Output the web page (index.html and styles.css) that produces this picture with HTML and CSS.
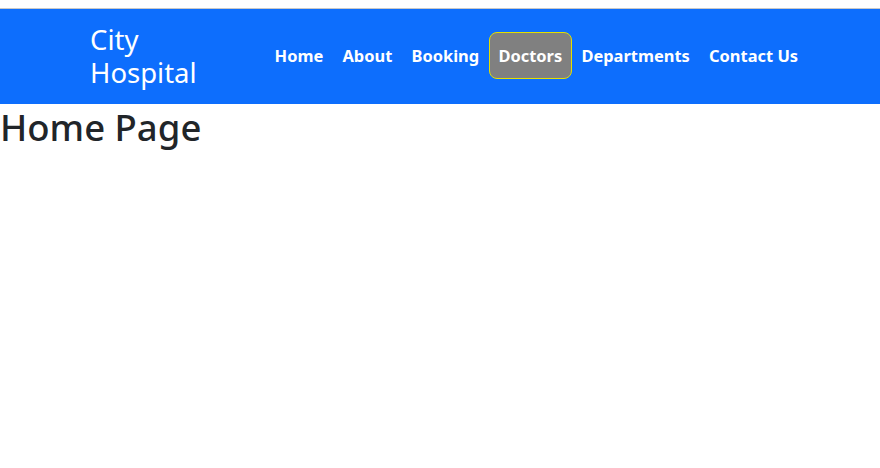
FILE: index.html
```html
<!DOCTYPE html>
<html>
<head>
<meta charset="utf-8">
<link rel="stylesheet" href="styles.css">
</head>
<body>
<div class="topline"></div>
<header class="navbar">
  <div class="brand-col"><a class="brand" href="#">City Hospital</a></div>
  <nav class="nav">
    <a class="nav-link" href="#">Home</a>
    <a class="nav-link" href="#">About</a>
    <a class="nav-link" href="#">Booking</a>
    <a class="nav-link active" href="#">Doctors</a>
    <a class="nav-link" href="#">Departments</a>
    <a class="nav-link" href="#">Contact Us</a>
  </nav>
</header>
<h1 class="title">Home Page</h1>
</body>
</html>
```

FILE: styles.css
```css
html, body {
  margin: 0;
  padding: 0;
  background: #fff;
  font-family: "Noto Sans", "Open Sans", sans-serif;
  color: #212529;
}
.topline {
  height: 8px;
  border-bottom: 1px solid #c8c8c8;
  box-sizing: content-box;
}
.navbar {
  height: 95px;
  background: #0d6efd;
  display: flex;
  align-items: center;
  padding-left: 90px;
}
.brand-col {
  width: 175px;
  flex: none;
}
.brand {
  display: block;
  width: 125px;
  color: #fff;
  text-decoration: none;
  font-size: 27.5px;
  line-height: 33px;
  padding-bottom: 2px;
}
.nav {
  display: flex;
  align-items: center;
  padding-bottom: 2px;
}
.nav-link {
  color: #fff;
  text-decoration: none;
  font-weight: 700;
  font-size: 16.45px;
  padding: 0 8.6px;
  line-height: 45px;
  border: 1px solid transparent;
  border-radius: 8px;
}
.nav-link.active {
  background: #808080;
  border-color: #e3e000;
}
.title {
  margin: 0;
  font-size: 36.5px;
  font-weight: 500;
  line-height: 1.2;
  padding-top: 2px;
}
```
